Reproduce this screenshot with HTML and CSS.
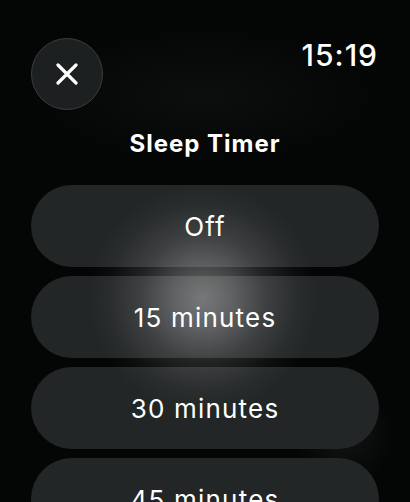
FILE: index.html
```html
<!DOCTYPE html>
<html lang="en">
<head>
  <meta charset="UTF-8" />
  <meta name="viewport" content="width=device-width, initial-scale=1.0"/>
  <title>Sleep Timer</title>
  <link rel="stylesheet" href="styles.css">
</head>
<body>

  <div class="screen">
    <header class="top-bar">
      <button class="close-btn" aria-label="Close">
        <svg width="22" height="22" viewBox="0 0 22 22">
          <path d="M2 2 L20 20 M20 2 L2 20" stroke="#fff" stroke-width="3.2" stroke-linecap="round"/>
        </svg>
      </button>
      <span class="clock">15:19</span>
    </header>

    <h1 class="title">Sleep Timer</h1>

    <div class="options">
      <button class="option">Off</button>
      <button class="option">15 minutes</button>
      <button class="option">30 minutes</button>
      <button class="option">45 minutes</button>
    </div>

    <div class="touch-glow"></div>
  </div>

</body>
</html>
```

FILE: styles.css
```css
* {
  margin: 0;
  padding: 0;
  box-sizing: border-box;
}

body {
  background: #040606;
  font-family: Inter, "Noto Sans", sans-serif;
  color: #fff;
  overflow: hidden;
}

.screen {
  position: relative;
  width: 410px;
  height: 502px;
  overflow: hidden;
  background:
    radial-gradient(ellipse 180px 70px at 205px 95px, rgba(255, 255, 255, 0.035), transparent),
    radial-gradient(circle 50px at 345px 435px, rgba(255, 255, 255, 0.06), transparent),
    #040606;
}

.top-bar {
  display: flex;
  justify-content: space-between;
  align-items: flex-start;
  padding: 38px 31px 0 31px;
}

.close-btn {
  width: 72px;
  height: 72px;
  border-radius: 50%;
  background: #1d2021;
  border: 1.5px solid #3a3d3e;
  display: flex;
  align-items: center;
  justify-content: center;
}

.clock {
  font-size: 30px;
  font-weight: 500;
  line-height: 30px;
  letter-spacing: 1px;
  margin-top: 2px;
  margin-right: 1px;
}

.title {
  text-align: center;
  font-size: 24px;
  font-weight: 700;
  line-height: 26px;
  margin-top: 21px;
  letter-spacing: 1px;
}

.options {
  display: flex;
  flex-direction: column;
  gap: 9px;
  padding: 0 31px;
  margin-top: 28px;
}

.option {
  height: 82px;
  flex-shrink: 0;
  border: none;
  border-radius: 41px;
  background: #232627;
  color: #fff;
  font-family: Inter, "Noto Sans", sans-serif;
  font-size: 26px;
  font-weight: 400;
  letter-spacing: 1.2px;
}

.touch-glow {
  position: absolute;
  left: 88px;
  top: 183px;
  width: 230px;
  height: 230px;
  border-radius: 50%;
  background: radial-gradient(circle closest-side, rgba(255, 255, 255, 0.38) 0%, rgba(255, 255, 255, 0.28) 25%, rgba(255, 255, 255, 0.12) 55%, rgba(255, 255, 255, 0.03) 82%, rgba(255, 255, 255, 0) 100%);
  pointer-events: none;
}
```
